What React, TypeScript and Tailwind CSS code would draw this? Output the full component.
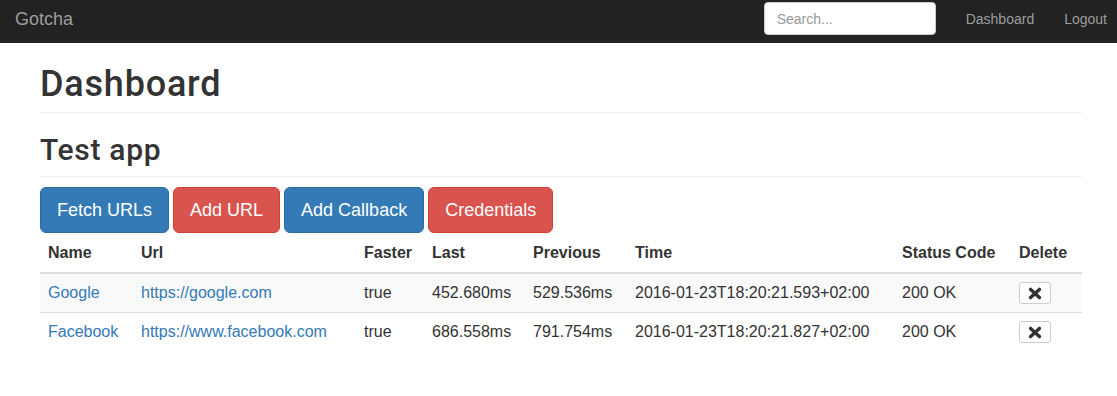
import React from "react";

const rows = [
  {
    name: "Google",
    url: "https://google.com",
    faster: "true",
    last: "452.680ms",
    previous: "529.536ms",
    time: "2016-01-23T18:20:21.593+02:00",
    status: "200 OK",
  },
  {
    name: "Facebook",
    url: "https://www.facebook.com",
    faster: "true",
    last: "686.558ms",
    previous: "791.754ms",
    time: "2016-01-23T18:20:21.827+02:00",
    status: "200 OK",
  },
];

function RemoveIcon() {
  return (
    <svg width="14" height="13" viewBox="0 0 14 13" aria-hidden="true">
      <line x1="2.6" y1="2.4" x2="11.4" y2="10.6" stroke="#333" strokeWidth="3.4" strokeLinecap="round" />
      <line x1="11.4" y1="2.4" x2="2.6" y2="10.6" stroke="#333" strokeWidth="3.4" strokeLinecap="round" />
    </svg>
  );
}

const cell = "border-t border-[#ddd] px-[8px] py-[8px] align-middle whitespace-nowrap";

export default function App() {
  return (
    <div className="min-h-[396px] bg-white font-['Liberation_Sans',Arial,sans-serif] text-[16px] leading-[22px] text-[#333]">
      <nav className="flex h-[43px] items-start bg-[#222] pr-[10px] text-[14px] leading-[20px]">
        <a className="ml-[15px] mt-[9px] text-[18px] leading-[20px] text-[#9d9d9d]">Gotcha</a>
        <div className="ml-auto flex items-start">
          <div className="mt-[2px] flex h-[33px] w-[172px] items-center rounded-[4px] border border-[#ccc] bg-white px-[12px] text-[14px] text-[#999]">
            Search...
          </div>
          <a className="ml-[30px] mt-[9px] text-[#9d9d9d]">Dashboard</a>
          <a className="ml-[30px] mt-[9px] text-[#9d9d9d]">Logout</a>
        </div>
      </nav>

      <main className="pl-[40px] pr-[35px]">
        <div className="mt-[21px] border-b border-[#eee] pb-[8px]">
          <h1 className="font-['Roboto',Arial,sans-serif] text-[36px] font-medium leading-[40px] tracking-[0.8px]">
            Dashboard
          </h1>
        </div>
        <div className="mt-[20px] border-b border-[#eee] pb-[10px]">
          <h2 className="font-['Roboto',Arial,sans-serif] text-[30px] font-medium leading-[33px] tracking-[0.7px]">
            Test app
          </h2>
        </div>

        <div className="mt-[10px] flex gap-[4px]">
          <button className="h-[46px] rounded-[6px] border border-[#2e6da4] bg-[#337ab7] px-[16px] text-[18px] leading-[24px] text-white">
            Fetch URLs
          </button>
          <button className="h-[46px] rounded-[6px] border border-[#d43f3a] bg-[#d9534f] px-[16px] text-[18px] leading-[24px] text-white">
            Add URL
          </button>
          <button className="h-[46px] rounded-[6px] border border-[#2e6da4] bg-[#337ab7] px-[16px] text-[18px] leading-[24px] text-white">
            Add Callback
          </button>
          <button className="h-[46px] rounded-[6px] border border-[#d43f3a] bg-[#d9534f] px-[16px] text-[18px] leading-[24px] text-white">
            Credentials
          </button>
        </div>

        <table className="mt-[1px] w-[1042px] table-fixed border-collapse text-left">
          <colgroup>
            <col className="w-[93px]" />
            <col className="w-[223px]" />
            <col className="w-[68px]" />
            <col className="w-[101px]" />
            <col className="w-[102px]" />
            <col className="w-[267px]" />
            <col className="w-[117px]" />
            <col className="w-[71px]" />
          </colgroup>
          <thead>
            <tr>
              {["Name", "Url", "Faster", "Last", "Previous", "Time", "Status Code", "Delete"].map((h) => (
                <th key={h} className="border-b-2 border-[#ddd] p-[8px] align-bottom font-bold whitespace-nowrap">
                  {h}
                </th>
              ))}
            </tr>
          </thead>
          <tbody>
            {rows.map((r, i) => (
              <tr key={r.name} className={i % 2 === 0 ? "bg-[#f9f9f9]" : ""}>
                <td className={cell}>
                  <a className="text-[#337ab7]">{r.name}</a>
                </td>
                <td className={cell}>
                  <a className="text-[#337ab7]">{r.url}</a>
                </td>
                <td className={cell}>{r.faster}</td>
                <td className={cell}>{r.last}</td>
                <td className={cell}>{r.previous}</td>
                <td className={cell}>{r.time}</td>
                <td className={cell}>{r.status}</td>
                <td className={cell}>
                  <button className="flex h-[22px] w-[32px] items-center justify-center rounded-[3px] border border-[#ccc] bg-white">
                    <RemoveIcon />
                  </button>
                </td>
              </tr>
            ))}
          </tbody>
        </table>
      </main>
    </div>
  );
}
